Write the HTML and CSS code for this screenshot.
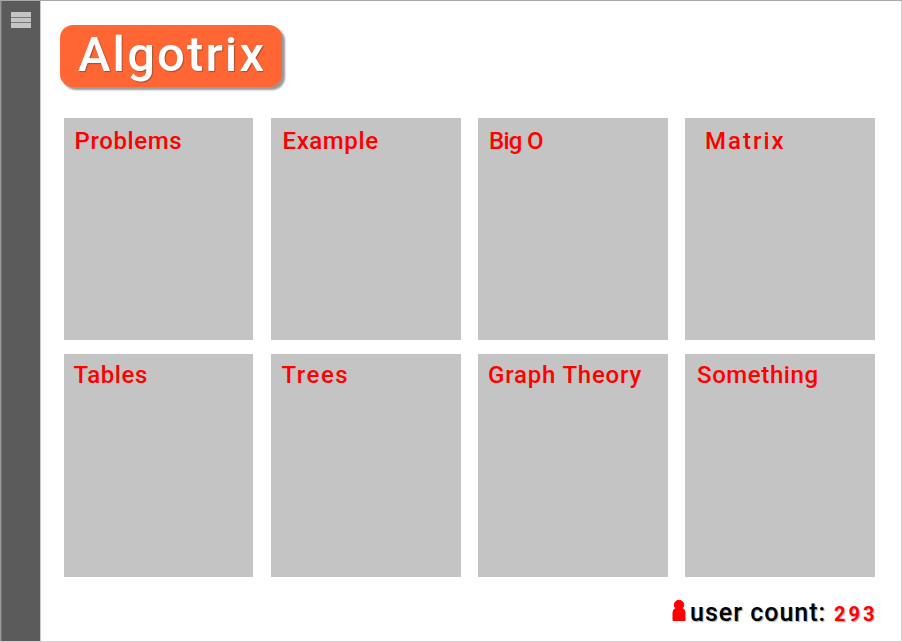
FILE: index.html
```html
<!DOCTYPE html>
<html lang="en">
<head>
<meta charset="utf-8">
<title>Algotrix</title>
<link rel="stylesheet" href="styles.css">
</head>
<body>
<div class="app">
  <nav class="sidebar">
    <button class="menu" aria-label="Menu"><span></span><span></span><span></span></button>
  </nav>
  <main class="content">
    <h1 class="logo"><span>Algotrix</span></h1>
    <section class="tiles">
      <article class="tile problems"><h2>Problems</h2></article>
      <article class="tile example"><h2>Example</h2></article>
      <article class="tile big-o"><h2>Big O</h2></article>
      <article class="tile matrix"><h2>Matrix</h2></article>
      <article class="tile tables"><h2>Tables</h2></article>
      <article class="tile trees"><h2>Trees</h2></article>
      <article class="tile graph"><h2>Graph Theory</h2></article>
      <article class="tile something"><h2>Something</h2></article>
    </section>
    <footer class="users">
      <svg class="person" width="14" height="23" viewBox="0 0 14 23"><path d="M1 21.5V13.5Q1 10.5 3.6 9.2A4.7 4.7 0 1 1 10.4 9.2Q13 10.5 13 13.5V21.5Z" fill="#f00" stroke="#f00"/></svg>
      <span class="caption">user count:</span>
      <span class="count">293</span>
    </footer>
  </main>
</div>
</body>
</html>
```

FILE: styles.css
```css
* { box-sizing: border-box; }
body { margin: 0; background: #fff; font-family: Roboto, "Liberation Sans", sans-serif; }
.app {
  display: flex;
  width: 902px;
  height: 642px;
  border: 1px solid #d0d0d0;
  border-top-color: #a8a8a8;
  border-left-color: #989898;
  overflow: hidden;
}
.sidebar {
  width: 40px;
  flex: none;
  padding: 11px 0 0 10px;
  background: #5b5b5b;
  border-right: 1px solid #c8c8c8;
  border-left: 1px solid #757575;
}
.menu {
  display: flex;
  flex-direction: column;
  gap: 1px;
  width: 20px;
  height: 16px;
  margin-left: -1px;
  padding: 0;
  border: 0;
  background: #777;
}
.menu span { flex: 1; background: #c4c4c4; }
.content { flex: 1; padding: 23.5px 0 0 19px; }
.logo {
  width: 222px;
  height: 62.5px;
  margin: 0;
  padding-left: 18px;
  border-radius: 13px;
  background: #ff6633;
  box-shadow: 3px 3px 2px #999;
  color: #fff;
  font-size: 49px;
  font-weight: 500;
  line-height: 59px;
  letter-spacing: 2.1px;
  text-shadow: 1px 1px 1px rgba(90, 60, 50, .55);
  white-space: nowrap;
}
.tiles {
  display: grid;
  grid-template-columns: 189.5px 190px 189.5px 189.5px;
  column-gap: 17.5px;
  grid-template-rows: 222px 223px;
  row-gap: 14px;
  margin: 31px 0 0 3.5px;
}
.tile { background: #c4c4c4; padding: 8px 0 0 11px; }
.tile h2 {
  margin: 0;
  color: #f00;
  font-size: 24px;
  font-weight: 500;
  line-height: 30px;
  white-space: nowrap;
}
.problems h2 { letter-spacing: .6px; }
.example { padding-left: 12px; }
.example h2 { letter-spacing: .6px; }
.big-o h2 { letter-spacing: -.7px; }
.matrix { padding-left: 20px; }
.matrix h2 { letter-spacing: 2px; }
.tables, .trees, .graph, .something { padding-top: 6px; }
.tables { padding-left: 10px; }
.graph { padding-left: 10px; }
.something { padding-left: 12px; }
.tables h2 { letter-spacing: .6px; }
.trees h2 { letter-spacing: 1.5px; }
.graph h2 { letter-spacing: .8px; }
.something h2 { letter-spacing: .6px; }
.users {
  display: flex;
  align-items: flex-start;
  margin: 21px 0 0 612px;
  font-weight: 500;
  line-height: 30px;
  text-shadow: 1px 1px 1px #aaa;
  white-space: nowrap;
}
.person { flex: none; margin-top: 1px; }
.caption { width: 144px; margin-left: 4px; font-size: 25px; letter-spacing: 1px; color: #000; }
.count { padding-top: 1px; font-size: 20px; font-weight: 700; letter-spacing: 3px; color: #f00; }
```
